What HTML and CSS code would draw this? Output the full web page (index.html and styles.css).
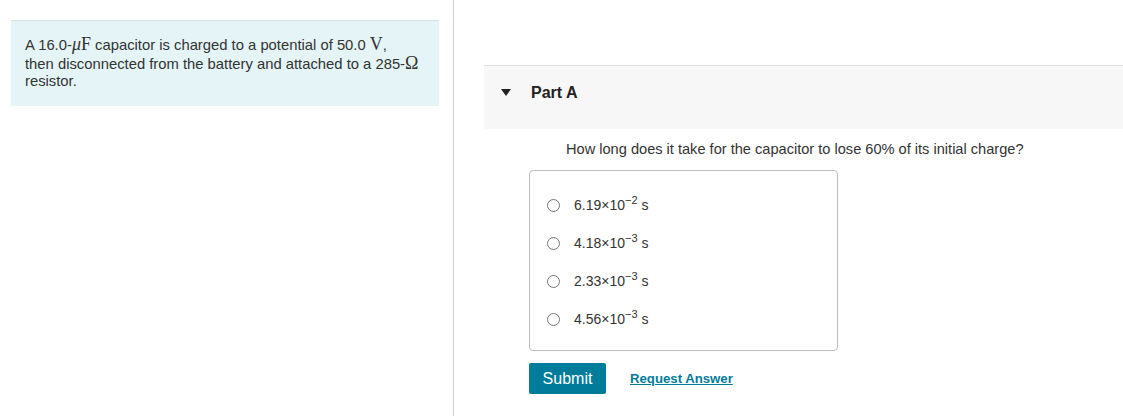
FILE: index.html
```html
<!DOCTYPE html>
<html>
<head>
<meta charset="utf-8">
<link rel="stylesheet" href="styles.css">
</head>
<body>
<div class="page">
  <div class="left">
    <div class="intro">
      A 16.0-<span class="m"><i>μ</i>F</span> capacitor is charged to a potential of 50.0 <span class="m">V</span>,<br>then disconnected from the battery and attached to a <span class="nw">285-<span class="m">Ω</span></span> resistor.
    </div>
  </div>
  <div class="right">
    <div class="part-head">
      <svg class="caret" width="10" height="7" viewBox="0 0 10 7"><path d="M0 0 L10 0 L5 7 Z" fill="#222"/></svg>
      <span class="part-title">Part A</span>
    </div>
    <div class="part-body">
      <p class="question">How long does it take for the capacitor to lose 60% of its initial charge?</p>
      <div class="options">
        <label class="opt"><span class="radio"></span><span>6.19×10<sup>−2</sup> s</span></label>
        <label class="opt"><span class="radio"></span><span>4.18×10<sup>−3</sup> s</span></label>
        <label class="opt"><span class="radio"></span><span>2.33×10<sup>−3</sup> s</span></label>
        <label class="opt"><span class="radio"></span><span>4.56×10<sup>−3</sup> s</span></label>
      </div>
      <div class="actions">
        <button class="submit">Submit</button>
        <a class="request" href="#">Request Answer</a>
      </div>
    </div>
  </div>
</div>
</body>
</html>
```
FILE: styles.css
```css
html, body {
  margin: 0;
  padding: 0;
  background: #fff;
}
body {
  font-family: "Liberation Sans", Arial, sans-serif;
  color: #333;
  font-size: 14px;
}
.page {
  display: flex;
  height: 416px;
}
.left {
  width: 454px;
  box-sizing: border-box;
  border-right: 1px solid #c5cfdc;
  padding: 20px 14px 0 11px;
  flex: none;
}
.intro {
  background: #e5f5f7;
  border-top: 1px solid #d9e2e4;
  padding: 15px 14px 15px 14px;
  line-height: 17.5px;
  font-size: 14.8px;
  color: #333;
}
.nw {
  white-space: nowrap;
}
.m {
  font-family: "Liberation Serif", "DejaVu Serif", serif;
  font-size: 18px;
}
.right {
  flex: 1;
  padding-top: 65px;
  padding-left: 30px;
}
.part-head {
  display: flex;
  align-items: flex-start;
  height: 64px;
  box-sizing: border-box;
  background: #f7f7f7;
  border-top: 1px solid #dddddd;
  padding-left: 17px;
  padding-top: 17px;
}
.caret {
  display: block;
  margin-top: 6px;
  margin-right: 20px;
}
.part-title {
  font-weight: bold;
  font-size: 16px;
  line-height: 19px;
  color: #222;
}
.part-body {
  padding-left: 45px;
}
.question {
  margin: 12px 0 0 37px;
  font-size: 14.6px;
  line-height: 17px;
  color: #333;
}
.options {
  margin-top: 12px;
  width: 309px;
  height: 181px;
  border: 1px solid #bdbdbd;
  border-radius: 4px;
  box-sizing: border-box;
  padding-top: 15px;
  padding-left: 17px;
}
.opt {
  display: flex;
  align-items: center;
  height: 38px;
  font-size: 14px;
  color: #333;
}
.opt sup {
  font-size: 11px;
  line-height: 0;
  vertical-align: 6px;
}
.radio {
  width: 11px;
  height: 11px;
  border: 1px solid #767676;
  border-radius: 50%;
  margin-right: 14px;
  flex: none;
  background: #fff;
}
.actions {
  display: flex;
  align-items: center;
  margin-top: 12px;
}
.submit {
  background: #007c9b;
  color: #fff;
  border: none;
  border-radius: 2px;
  font-family: "Liberation Sans", Arial, sans-serif;
  font-size: 16px;
  width: 77px;
  height: 31px;
  padding: 0;
}
.request {
  margin-left: 24px;
  color: #007c9b;
  font-weight: bold;
  font-size: 13.2px;
  text-decoration: underline;
}
```
